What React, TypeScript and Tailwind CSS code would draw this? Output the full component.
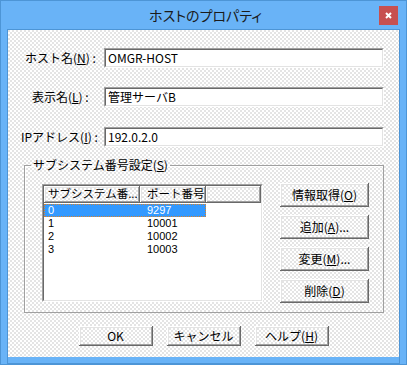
import React from 'react'

const FONT = "font-['MS_UI_Gothic','Noto_Sans_CJK_JP',sans-serif]"
const PATTERN = 'bg-[repeating-conic-gradient(#ffffff_0%_25%,#e4e4e4_0%_50%)] bg-[length:4px_4px]'
const RAISED =
  'shadow-[inset_-1px_-1px_0_#696969,inset_1px_1px_0_#ffffff,inset_-2px_-2px_0_#a0a0a0,inset_2px_2px_0_#e3e3e3]'

const TextBox: React.FC<{ value: string }> = ({ value }) => (
  <div className="w-[280px] h-[20px] border border-t-[#a0a0a0] border-l-[#a0a0a0] border-b-white border-r-white">
    <div className="h-full bg-white border border-t-[#696969] border-l-[#696969] border-b-[#e3e3e3] border-r-[#e3e3e3] pl-[2px] text-[12px] leading-[16px] text-black">
      {value}
    </div>
  </div>
)

const Button: React.FC<{ className?: string; children: React.ReactNode }> = ({ className, children }) => (
  <div className={`${PATTERN} ${RAISED} flex items-center justify-center text-[12px] text-black ${className}`}>
    {children}
  </div>
)

const ROWS = [
  ['0', '9297'],
  ['1', '10001'],
  ['2', '10002'],
  ['3', '10003'],
]

export default function App() {
  return (
    <div className={`${FONT} w-[407px] h-[365px] bg-[#69b3f7] border border-[#4d95d6] flex flex-col`}>
      {/* Title bar */}
      <div className="relative h-[28px] flex items-center justify-center">
        <span className="text-[14px] text-[#1b1b1b] [font-feature-settings:'palt'] font-['Noto_Sans_CJK_JP',sans-serif] pl-[4px]">
          ホストのプロパティ
        </span>
        <div className="absolute right-[8px] top-[5px] w-[19px] h-[19px] bg-[#c75050] flex items-center justify-center">
          <svg width="7" height="7" viewBox="0 0 7 7">
            <path d="M1 1 L6 6 M6 1 L1 6" stroke="#fff" strokeWidth="2" />
          </svg>
        </div>
      </div>

      {/* Client area */}
      <div className="mx-[6px] border border-[#4d95d6] flex-1">
        <div className={`${PATTERN} h-[327px] flex flex-col text-[12px] text-black`}>
          <div className="mt-[18px] flex items-center h-[20px]">
            <div className="w-[96px] pl-[17px]">
              ホスト名(<u>N</u>) :
            </div>
            <TextBox value="OMGR-HOST" />
          </div>
          <div className="mt-[19px] flex items-center h-[20px]">
            <div className="w-[96px] pl-[24px]">
              表示名(<u>L</u>) :
            </div>
            <TextBox value="管理サーバB" />
          </div>
          <div className="mt-[20px] flex items-center h-[20px]">
            <div className="w-[96px] pl-[13px]">
              IPアドレス(<u>I</u>) :
            </div>
            <TextBox value="192.0.2.0" />
          </div>

          {/* Group box */}
          <fieldset className="mt-[11px] ml-[16px] w-[360px] h-[155px] border border-[#a0a0a0] shadow-[inset_1px_1px_0_#ffffff]">
            <legend className="ml-[6px] px-[2px] leading-[14px]">
              サブシステム番号設定(<u>S</u>)
            </legend>
            <div className="flex pt-[11px] pl-[17px]">
              <div className="mt-[1px] w-[221px] h-[118px] border border-t-[#a0a0a0] border-l-[#a0a0a0] border-b-white border-r-white">
                <div className="h-full bg-white border border-t-[#696969] border-l-[#696969] border-b-[#e3e3e3] border-r-[#e3e3e3] flex flex-col">
                  <div className="flex h-[17px] leading-[15px] text-[11.5px]">
                    <div className={`${PATTERN} ${RAISED} w-[96px] pl-[4px] whitespace-nowrap overflow-hidden`}>
                      サブシステム番...
                    </div>
                    <div className={`${PATTERN} ${RAISED} w-[66px] pl-[7px] whitespace-nowrap`}>ポート番号</div>
                    <div className={`${PATTERN} ${RAISED} flex-1`} />
                  </div>
                  <div className="mt-[1px] flex flex-col text-[11px] font-['Liberation_Sans',sans-serif]">
                    {ROWS.map(([sub, port], i) => (
                      <div
                        key={i}
                        className={`flex h-[13px] leading-[13px] w-[162px] ${
                          i === 0 ? 'bg-[#3399ff] text-white outline outline-1 outline-dotted outline-[#d9822b] -outline-offset-1' : ''
                        }`}
                      >
                        <div className="w-[96px] pl-[4px]">{sub}</div>
                        <div className="w-[66px] pl-[7px]">{port}</div>
                      </div>
                    ))}
                  </div>
                </div>
              </div>
              <div className="ml-[17px] flex flex-col gap-[8px]">
                <Button className="w-[89px] h-[24px]">
                  情報取得(<u>O</u>)
                </Button>
                <Button className="w-[89px] h-[24px]">
                  追加(<u>A</u>)...
                </Button>
                <Button className="w-[89px] h-[24px]">
                  変更(<u>M</u>)...
                </Button>
                <Button className="w-[89px] h-[24px]">
                  削除(<u>D</u>)
                </Button>
              </div>
            </div>
          </fieldset>

          {/* Bottom buttons */}
          <div className="mt-[13px] flex justify-center gap-[14px]">
            <Button className="w-[74px] h-[20px]">OK</Button>
            <Button className="w-[74px] h-[20px]">キャンセル</Button>
            <Button className="w-[74px] h-[20px]">
              ヘルプ(<u>H</u>)
            </Button>
          </div>
        </div>
      </div>
    </div>
  )
}
